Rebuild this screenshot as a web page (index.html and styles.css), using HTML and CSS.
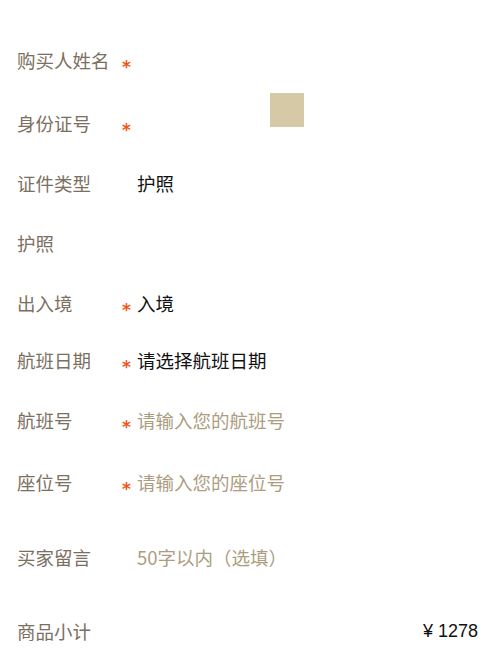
FILE: index.html
```html
<!DOCTYPE html>
<html lang="zh-CN">
<head>
<meta charset="utf-8">
<title>订单信息</title>
<link rel="stylesheet" href="styles.css">
</head>
<body>
<div class="page">
  <div class="swatch"></div>
  <div class="row">
    <span class="label">购买人姓名</span><span class="star">*</span><span class="value"></span>
  </div>
  <div class="row row-shift">
    <span class="label">身份证号</span><span class="star">*</span><span class="value"></span>
  </div>
  <div class="row">
    <span class="label">证件类型</span><span class="star"></span><span class="value filled">护照</span>
  </div>
  <div class="row">
    <span class="label">护照</span><span class="star"></span><span class="value"></span>
  </div>
  <div class="row">
    <span class="label">出入境</span><span class="star">*</span><span class="value filled">入境</span>
  </div>
  <div class="row row-up">
    <span class="label">航班日期</span><span class="star">*</span><span class="value filled">请选择航班日期</span>
  </div>
  <div class="row">
    <span class="label">航班号</span><span class="star">*</span><span class="value hint">请输入您的航班号</span>
  </div>
  <div class="row row-down">
    <span class="label">座位号</span><span class="star">*</span><span class="value hint">请输入您的座位号</span>
  </div>
  <div class="row row-message">
    <span class="label">买家留言</span><span class="star"></span><span class="value hint">50字以内（选填）</span>
  </div>
  <div class="row row-total">
    <span class="label">商品小计</span><span class="price">¥ 1278</span>
  </div>
</div>
</body>
</html>
```

FILE: styles.css
```css
html, body {
  margin: 0;
  padding: 0;
  background: #ffffff;
}
body {
  font-family: "Noto Sans CJK SC", "Noto Sans", sans-serif;
  width: 500px;
  height: 653px;
  overflow: hidden;
}
.page {
  position: relative;
  padding: 30px 22px 0 17px;
}
.swatch {
  position: absolute;
  left: 270px;
  top: 93px;
  width: 34px;
  height: 34px;
  background: #d6c9a6;
}
.row {
  display: flex;
  align-items: center;
  height: 60px;
  font-size: 18.5px;
}
.row-shift { margin-top: 3px; }
.row-up { margin-top: -3px; }
.row-down { margin-top: 2px; }
.row-message { margin-top: 15px; }
.row-total { margin-top: 14px; }
.label {
  width: 105px;
  flex: none;
  color: #7b705f;
  white-space: nowrap;
}
.star {
  width: 15px;
  flex: none;
  color: #f0561b;
  font-size: 17px;
  font-weight: bold;
  font-family: "DejaVu Sans", sans-serif;
  line-height: 1;
  padding-top: 15px;
  box-sizing: border-box;
  height: 32px;
}
.value {
  flex: 1;
  white-space: nowrap;
}
.filled { color: #111111; }
.hint { color: #ac9d80; }
.price {
  margin-left: auto;
  color: #111111;
  font-family: "Liberation Sans", "Noto Sans CJK SC", sans-serif;
  font-size: 18px;
}
```
